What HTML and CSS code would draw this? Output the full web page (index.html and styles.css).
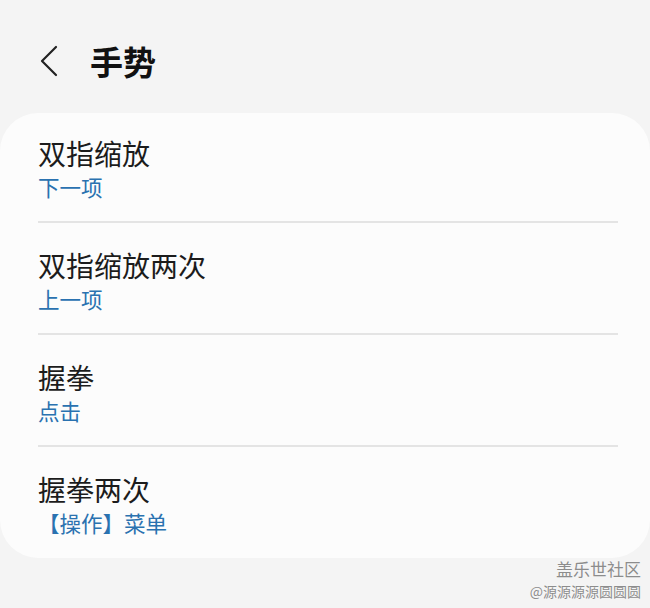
FILE: index.html
```html
<!DOCTYPE html>
<html>
  <head>
    <title>手势</title>
    <meta name="viewport" content="width=device-width, initial-scale=1.0">
    <link rel="stylesheet" href="styles.css">
  </head>
  <body>
    <div class = "mainbody">
      <div class = "topbar">
        <svg class = "backbtn" width="20" height="32" viewBox="0 0 20 32">
          <polyline points="16,2 2,16 16,30" fill="none" stroke="#222" stroke-width="2.2" stroke-linecap="round" stroke-linejoin="round"/>
        </svg>
        <div class = "pagetitle">手势</div>
      </div>
      <div class = "card">
        <div class = "row first">
          <div class = "rowtitle">双指缩放</div>
          <div class = "rowsub">下一项</div>
        </div>
        <div class = "row">
          <div class = "rowtitle">双指缩放两次</div>
          <div class = "rowsub">上一项</div>
        </div>
        <div class = "row">
          <div class = "rowtitle">握拳</div>
          <div class = "rowsub">点击</div>
        </div>
        <div class = "row last">
          <div class = "rowtitle">握拳两次</div>
          <div class = "rowsub">【操作】菜单</div>
        </div>
      </div>
      <div class = "watermark">
        <div class = "wm1">盖乐世社区</div>
        <div class = "wm2">@源源源源圆圆圆</div>
      </div>
    </div>
  </body>
</html>
```

FILE: styles.css
```css
*{box-sizing:border-box;margin:0;padding:0;}
body{background:#f4f4f4;font-family:"Noto Sans CJK SC","Noto Sans",sans-serif;color:#1a1a1a;}
.mainbody{height:608px;width:650px;position:relative;overflow:hidden;}
.topbar{height:113px;display:flex;align-items:center;padding:6px 0 0 40px;}
.backbtn{display:block;margin-top:2px;}
.pagetitle{font-size:33px;font-weight:700;line-height:40px;margin-left:30px;color:#111;margin-top:2px;}
.card{background:#fcfcfc;border-radius:38px;padding:0 32px 0 38px;height:445px;}
.row{padding-top:26px;height:112px;border-bottom:2px solid #e4e4e4;}
.row.first{padding-top:24px;height:110px;}
.row.last{border-bottom:none;}
.rowtitle{font-size:28px;line-height:32px;color:#1c1c1c;}
.rowsub{font-size:21.5px;line-height:30px;margin-top:3px;color:#2a72b0;}
.watermark{position:absolute;right:9px;bottom:6px;text-align:right;color:#8c8c8c;text-shadow:0 0 1px #fff;}
.wm1{font-size:17px;line-height:22px;}
.wm2{font-size:14px;line-height:22px;}
```
